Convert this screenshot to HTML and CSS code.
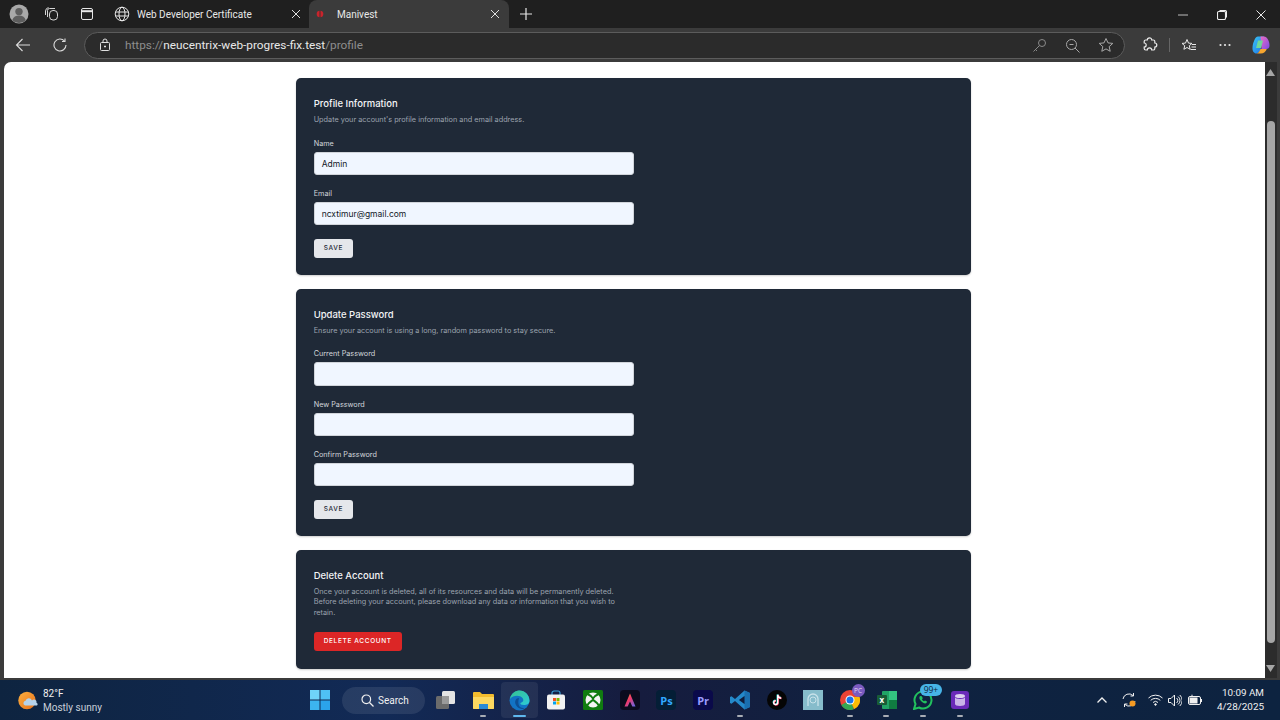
FILE: index.html
```html
<!DOCTYPE html>
<html lang="en">
<head>
<meta charset="utf-8">
<title>Manivest</title>
<link rel="stylesheet" href="styles.css">
</head>
<body>
<div class="tabstrip">
  <div class="strip-left">
    <svg class="avatar" width="20" height="20" viewBox="0 0 20 20"><circle cx="10" cy="10" r="9.5" fill="#a9a9a9"/><circle cx="10" cy="7.6" r="3.7" fill="#5e5e5e"/><path d="M3.2 16.2c1.2-3.4 3.7-4.7 6.8-4.7s5.600 1.300 6.800 4.700A9.500 9.500 0 0 1 3.200 16.200z" fill="#5e5e5e"/></svg>
    <svg class="strip-ic" width="16" height="16" viewBox="0 0 16 16" fill="none" stroke="#d6d6d6"><path d="M3.500 11V4.500a2 2 0 0 1 2-2H11"/><rect x="5.500" y="4.500" width="8" height="9.500" rx="3.500"/><path d="M1.500 9V5a4 4 0 0 1 3-3.500"/></svg>
    <svg class="strip-ic" width="14" height="14" viewBox="0 0 14 14" fill="none" stroke="#e6e6e6"><rect x="1.500" y="1.500" width="11" height="11" rx="1.500"/><path d="M1.500 4.200h11" stroke-width="2"/></svg>
    <span class="strip-sep"></span>
  </div>
  <div class="tab">
    <svg width="16" height="16" viewBox="0 0 16 16" fill="none" stroke="#e8e8e8"><circle cx="8" cy="8" r="6.800"/><ellipse cx="8" cy="8" rx="3" ry="6.800"/><path d="M1.500 6h13M1.500 10h13"/></svg>
    <span class="tab-title">Web Developer Certificate</span>
    <svg class="tab-x" width="10" height="10" viewBox="0 0 10 10" stroke="#e0e0e0"><path d="M1 1l8 8M9 1l-8 8"/></svg>
  </div>
  <div class="tab tab-active">
    <svg width="16" height="16" viewBox="0 0 16 16"><circle cx="8" cy="8" r="3.300" fill="#c8242c"/><path d="M8 4.500v7" stroke="#4a2a2c"/></svg>
    <span class="tab-title">Manivest</span>
    <svg class="tab-x" width="10" height="10" viewBox="0 0 10 10" stroke="#e0e0e0"><path d="M1 1l8 8M9 1l-8 8"/></svg>
  </div>
  <svg class="newtab" width="14" height="14" viewBox="0 0 14 14" stroke="#e6e6e6" stroke-width="1.200"><path d="M7 1v12M1 7h12"/></svg>
  <div class="winctl">
    <svg width="10" height="10" viewBox="0 0 10 10" stroke="#bdbdbd"><path d="M0 5h10"/></svg>
    <svg width="10" height="10" viewBox="0 0 10 10" fill="none" stroke="#eee" stroke-width="1.100"><rect x=".5" y="1.500" width="8" height="8" rx="1.200"/><path d="M2.500 .5h5.500a1.500 1.500 0 0 1 1.500 1.500v5.500"/></svg>
    <svg width="10" height="10" viewBox="0 0 10 10" stroke="#e8e8e8"><path d="M.5 .5l9 9M9.500 .5l-9 9"/></svg>
  </div>
</div>
<div class="toolbar">
  <svg class="back" width="16" height="14" viewBox="0 0 16 14" fill="none" stroke="#dcdcdc" stroke-width="1.100"><path d="M15 7H1.500M7.500 1l-6 6 6 6"/></svg>
  <svg class="reload" width="14" height="14" viewBox="0 0 14 14" fill="none" stroke="#dcdcdc" stroke-width="1.100"><path d="M11.500 3A6 6 0 1 0 13 7"/><path d="M12 .5V3.500H9"/></svg>
  <div class="omnibox">
    <svg class="lock" width="12" height="14" viewBox="0 0 12 14" fill="none" stroke="#e0e0e0"><rect x="1.500" y="4.500" width="9" height="8" rx="1"/><path d="M4 4.500V3a2 2 0 0 1 4 0v1.500"/><path d="M5 8.500h2" stroke-width="1.500"/></svg>
    <span class="url"><span class="url-dim">https://</span><span class="url-host">neucentrix-web-progres-fix.test</span><span class="url-dim">/profile</span></span>
    <div class="omni-right">
      <svg width="15" height="15" viewBox="0 0 15 15" fill="none" stroke="#8a8a8a"><circle cx="10" cy="5" r="3.500"/><path d="M7.500 7.500L1.500 13.500M3.500 11.500l1.500 1.500"/></svg>
      <svg width="15" height="15" viewBox="0 0 15 15" fill="none" stroke="#a8a8a8"><circle cx="6.500" cy="6.500" r="5"/><path d="M10 10l4.500 4.500M4.500 6.500h4"/></svg>
      <svg width="16" height="16" viewBox="0 0 16 16" fill="none" stroke="#a8a8a8"><path d="M8 1.500l2 4.400 4.800.5-3.600 3.200 1 4.700L8 11.900l-4.200 2.400 1-4.700L1.200 6.400 6 5.900z"/></svg>
    </div>
  </div>
  <div class="tool-right">
    <svg class="ext" width="16" height="16" viewBox="0 0 16 16" fill="none" stroke="#eaeaea" stroke-width="1.200"><path d="M5.300 3a2.200 2.200 0 0 1 4.400 0h1.600A1.500 1.500 0 0 1 12.800 4.500V6a2 2 0 0 1 0 4v1.500A1.500 1.500 0 0 1 11.300 13H9.700a2.200 2.200 0 0 0-4.400 0H3.700A1.500 1.500 0 0 1 2.200 11.500V10a2 2 0 0 0 0-4V4.500A1.500 1.500 0 0 1 3.700 3z"/></svg>
    <span class="tool-sep"></span>
    <svg class="fav" width="16" height="15" viewBox="0 0 16 15" fill="none" stroke="#eaeaea"><path d="M6 1.500l1.500 3.600 3.500.3-2.700 2.300.8 3.600L6 9.500l-3.100 1.800.8-3.600L1 5.400l3.500-.3zM11 6.500h4M10.500 9h4.500M9.500 11.500h5.500"/></svg>
    <svg class="dots" width="12" height="4" viewBox="0 0 12 4" fill="#e6e6e6"><circle cx="1.500" cy="2" r="1.100"/><circle cx="6" cy="2" r="1.100"/><circle cx="10.500" cy="2" r="1.100"/></svg>
    <svg class="copilot" width="18" height="18" viewBox="0 0 18 18"><defs><linearGradient id="cpa" x1="0" y1="0" x2="1" y2="1"><stop offset="0" stop-color="#39c6f4"/><stop offset="1" stop-color="#1f6fe8"/></linearGradient><linearGradient id="cpb" x1="0" y1="0" x2="1" y2="1"><stop offset="0" stop-color="#f06cc0"/><stop offset="1" stop-color="#7a4be8"/></linearGradient></defs><path d="M6 .5h6l-3.500 13c-.4 1.500-2 4-4 4C2 17.500.3 15 .5 12 .8 7 3 .5 6 .5z" fill="url(#cpa)"/><path d="M8.500.5H12c3 0 5.800 5 5.500 9.500-.1 2-1.500 3-3 3H9.500z" fill="url(#cpb)"/><path d="M4.500 17.500c2 0 3-2.500 4-4.500h6.300c-1 2.500-3 4.500-6 4.500z" fill="#f7a62f"/><path d="M6 4.500h5L9 12H4z" fill="#6fd89a"/></svg>
  </div>
</div>
<div class="viewport">
  <main class="page">
    <section class="card">
      <h2>Profile Information</h2>
      <p class="desc">Update your account's profile information and email address.</p>
      <label class="lbl lbl-first">Name</label>
      <div class="field">Admin</div>
      <label class="lbl">Email</label>
      <div class="field">ncxtimur@gmail.com</div>
      <span class="btn">SAVE</span>
    </section>
    <section class="card">
      <h2>Update Password</h2>
      <p class="desc">Ensure your account is using a long, random password to stay secure.</p>
      <label class="lbl lbl-first">Current Password</label>
      <div class="field"></div>
      <label class="lbl">New Password</label>
      <div class="field"></div>
      <label class="lbl">Confirm Password</label>
      <div class="field"></div>
      <span class="btn">SAVE</span>
    </section>
    <section class="card card-del">
      <h2>Delete Account</h2>
      <p class="desc desc-long">Once your account is deleted, all of its resources and data will be permanently deleted. Before deleting your account, please download any data or information that you wish to retain.</p>
      <span class="btn btn-red">DELETE ACCOUNT</span>
    </section>
  </main>
  <div class="scrollbar">
    <div class="track">
      <svg class="arrow" width="9" height="7" viewBox="0 0 9 7" fill="#a6a6a6"><path d="M4.500 0L9 7H0z"/></svg>
      <div class="thumb"></div>
      <svg class="arrow" width="9" height="7" viewBox="0 0 9 7" fill="#a6a6a6"><path d="M4.500 7L0 0h9z"/></svg>
    </div>
  </div>
</div>
<footer class="taskbar">
  <div class="weather">
    <svg width="20" height="20" viewBox="0 0 20 20"><defs><linearGradient id="sun" x1="0" y1="0" x2="1" y2="1"><stop offset="0" stop-color="#fbb040"/><stop offset="1" stop-color="#e8701a"/></linearGradient></defs><circle cx="9" cy="9.500" r="8.700" fill="url(#sun)"/><path d="M7 14.500a2.500 2.500 0 0 1 .5-4.800 3.500 3.500 0 0 1 6.500-.3 2.600 2.600 0 0 1 4.500 2.300 1.600 1.600 0 0 1 .5 2.800z" fill="#b6d2ea"/></svg>
    <div class="weather-text"><div>82°F</div><div class="w-sub">Mostly sunny</div></div>
  </div>
  <div class="task-center">
    <svg class="win" width="20" height="20" viewBox="0 0 20 20"><rect width="9.500" height="9.500" fill="#6fd3f8"/><rect x="10.500" width="9.500" height="9.500" fill="#4fc0f4"/><rect y="10.500" width="9.500" height="9.500" fill="#3cb4f0"/><rect x="10.500" y="10.500" width="9.500" height="9.500" fill="#2ba3ea"/></svg>
    <div class="search"><svg width="13" height="13" viewBox="0 0 13 13" fill="none" stroke="#f0f0f0" stroke-width="1.200"><circle cx="5.300" cy="5.300" r="4.300"/><path d="M8.500 8.500l4 4"/></svg><span>Search</span></div>
    <div class="ti"><svg width="20" height="20" viewBox="0 0 20 20"><rect x="0" y="6" width="13" height="13" rx="1.500" fill="#6b6b6b"/><rect x="6" y="1" width="13" height="13" rx="1.500" fill="#e4e4e4"/><rect x="6" y="6" width="7" height="8" fill="#9a9a9a"/></svg></div>
    <div class="ti"><svg width="21" height="19" viewBox="0 0 21 19"><path d="M0 2a1 1 0 0 1 1-1h6l2 2h11a1 1 0 0 1 1 1v13a1 1 0 0 1-1 1H1a1 1 0 0 1-1-1z" fill="#f3bc2e"/><path d="M0 6h21v11a1 1 0 0 1-1 1H1a1 1 0 0 1-1-1z" fill="#fcd860"/><rect x="6" y="13" width="9" height="5" fill="#2a8ad6"/></svg><i class="dot"></i></div>
    <div class="ti ti-on"><svg width="21" height="21" viewBox="0 0 21 21"><defs><linearGradient id="edge" x1="0" y1="0" x2="1" y2="1"><stop offset="0" stop-color="#36c48e"/><stop offset="1" stop-color="#2dc9d8"/></linearGradient></defs><circle cx="10.500" cy="10.500" r="10" fill="#1273c4"/><path d="M1 9C2 3 7 .5 10.500 .5 16 .5 20.500 5 20.500 11c0 3-3 4-5.500 4-3 0-4-1-3.500-2 3-1 3.500-3 2-5C11 5 4 5 1 9z" fill="url(#edge)"/><path d="M10 8c-3 0-4.500 3-3.500 6 1 3 4 5 8 5 1 0 .5-1-.5-1-3 0-6-3-4-10z" fill="#0d4f95"/></svg><i class="dot dot-on"></i></div>
    <div class="ti"><svg width="20" height="20" viewBox="0 0 20 20"><path d="M6 5V3a2 2 0 0 1 2-2h4a2 2 0 0 1 2 2v2" fill="none" stroke="#3aa0d8" stroke-width="1.200"/><rect x="1" y="4.500" width="18" height="15" rx="2" fill="#f2f2f2"/><rect x="7" y="8" width="3" height="3" fill="#f25022"/><rect x="10.500" y="8" width="3" height="3" fill="#7fba00"/><rect x="7" y="11.500" width="3" height="3" fill="#00a4ef"/><rect x="10.500" y="11.500" width="3" height="3" fill="#ffb900"/></svg></div>
    <div class="ti"><svg width="20" height="20" viewBox="0 0 20 20"><rect width="20" height="20" rx="1.500" fill="#107c10"/><circle cx="10" cy="10" r="7.500" fill="#f4f4f4"/><path d="M3.500 3.500C7 5 9 7 10 8.500 11 7 13 5 16.500 3.500M3.500 17C5 13 8 11 10 9.800 12 11 15 13 16.500 17" fill="none" stroke="#107c10" stroke-width="2"/></svg></div>
    <div class="ti"><svg width="20" height="20" viewBox="0 0 20 20"><defs><linearGradient id="aff" x1="0" y1="0" x2="1" y2="1"><stop offset="0" stop-color="#fbb02c"/><stop offset=".45" stop-color="#f0386b"/><stop offset="1" stop-color="#5a6cf0"/></linearGradient></defs><rect width="20" height="20" rx="4" fill="#0b0b1e"/><path d="M10 3.500l5.500 13h-3.200L10 11.500 7.700 16.500H4.500z" fill="url(#aff)"/></svg></div>
    <div class="ti"><span class="app app-ps">Ps</span></div>
    <div class="ti"><span class="app app-pr">Pr</span></div>
    <div class="ti"><svg width="20" height="20" viewBox="0 0 20 20"><path d="M14.500 .5L20 3v14l-5.500 2.500L5 11l-3.500 2.800L0 13V7l1.500-.8L5 9z" fill="#2489ca"/><path d="M14.500 .5L20 3v14l-5.500 2.500zM14.500 6L9 10l5.500 4z" fill="#1a6fb0"/><path d="M14.500 6v8L9 10z" fill="#0f1d3c"/></svg><i class="dot"></i></div>
    <div class="ti"><svg width="20" height="20" viewBox="0 0 20 20"><circle cx="10" cy="10" r="10" fill="#050505"/><path d="M10.500 4.500v7.800a2 2 0 1 1-2-2M10.500 4.500c.3 2 1.700 3.200 3.500 3.400" fill="none" stroke="#25f4ee" stroke-width="1.800"/><path d="M11 5v7.800a2 2 0 1 1-2-2M11 5c.3 2 1.700 3.200 3.500 3.400" fill="none" stroke="#fe2c55" stroke-width="1.800"/><path d="M10.700 4.800v7.800a2 2 0 1 1-2-2M10.700 4.800c.3 2 1.700 3.200 3.500 3.400" fill="none" stroke="#fff" stroke-width="1.400"/></svg></div>
    <div class="ti"><svg width="20" height="20" viewBox="0 0 20 20"><rect width="20" height="20" fill="#86bccb"/><path d="M5 16V9a5 5 0 0 1 10 0v7" fill="none" stroke="#c8e2ea" stroke-width="1.300"/><circle cx="10" cy="10" r="3" fill="none" stroke="#c8e2ea"/></svg></div>
    <div class="ti"><svg width="20" height="20" viewBox="0 0 20 20"><circle cx="10" cy="10" r="10" fill="#ea4335"/><path d="M10 10L1.300 15A10 10 0 0 0 10 20c1.500 0 3-.3 4-1z" fill="#34a853"/><path d="M10 10l4.300 9A10 10 0 0 0 19.600 7H10z" fill="#fbbc05"/><circle cx="10" cy="10" r="4.500" fill="#fff"/><circle cx="10" cy="10" r="3.500" fill="#1a73e8"/></svg><b class="badge-pc">PC</b><i class="dot"></i></div>
    <div class="ti"><svg width="20" height="18" viewBox="0 0 20 18"><rect x="5" y="0" width="15" height="18" rx="1" fill="#21a366"/><rect x="12" y="9" width="8" height="9" fill="#107c41"/><rect x="12" y="0" width="8" height="9" fill="#33c481"/><rect x="0" y="4" width="10" height="10" rx="1" fill="#185c37"/><text x="2.600" y="12" class="xl">x</text></svg><i class="dot"></i></div>
    <div class="ti"><svg width="20" height="20" viewBox="0 0 20 20"><path d="M1 19l1.500-5A8.500 8.500 0 1 1 6 17.500z" fill="none" stroke="#22c15e" stroke-width="2"/><path d="M7 6c-1 1-1 3 1 5s4 3 5.500 2l.5-1.500-2-1-1 .8c-1-.5-1.500-1-2-2l.8-1-1-2z" fill="#22c15e"/></svg><b class="badge-wa">99+</b><i class="dot"></i></div>
    <div class="ti"><svg width="18" height="18" viewBox="0 0 18 18"><rect width="18" height="18" rx="3" fill="#6a2bb8"/><ellipse cx="9" cy="5" rx="5" ry="2" fill="#ddd2ef"/><path d="M4 6v7c0 1 2 2 5 2s5-1 5-2V6c0 1-2 2-5 2S4 7 4 6z" fill="#c9b5e8"/></svg><i class="dot"></i></div>
  </div>
  <div class="tray">
    <svg class="chev" width="10" height="6" viewBox="0 0 10 6" fill="none" stroke="#f0f0f0" stroke-width="1.300"><path d="M.5 5.500L5 1l4.500 4.500"/></svg>
    <svg class="sync" width="16" height="16" viewBox="0 0 16 16" fill="none" stroke="#f0f0f0"><path d="M2 7a6 6 0 0 1 10-3.500M12.500 1v3h-3M14 9a6 6 0 0 1-10 3.500M3.500 15v-3h3"/><circle cx="11.500" cy="11.500" r="3" fill="#f59b23" stroke="none"/></svg>
    <svg class="wifi" width="15" height="12" viewBox="0 0 15 12" fill="none" stroke="#f0f0f0"><path d="M.5 4a10 10 0 0 1 14 0M2.700 6.300a7 7 0 0 1 9.600 0M5 8.500a3.600 3.600 0 0 1 5 0"/><circle cx="7.500" cy="10.500" r=".8" fill="#f0f0f0"/></svg>
    <svg class="vol" width="14" height="13" viewBox="0 0 14 13" fill="none" stroke="#f0f0f0"><path d="M.5 4.500h2.500L6.500 1v11L3 8.500H.5zM8.500 4a3 3 0 0 1 0 5M10 2.500a5 5 0 0 1 0 8M11.800 1a7.500 7.500 0 0 1 0 11"/></svg>
    <svg class="bat" width="14" height="12" viewBox="0 0 14 12" fill="#f0f0f0"><rect x=".5" y="2.500" width="12" height="8" rx="1.500" fill="none" stroke="#f0f0f0"/><rect x="1.500" y="3.500" width="8" height="6"/><rect x="13" y="5" width="1" height="3"/><path d="M4 0L3 3h2z"/></svg>
    <div class="clock"><div>10:09 AM</div><div>4/28/2025</div></div>
  </div>
</footer>
</body>
</html>
```
FILE: styles.css
```css
* { box-sizing: border-box; }
html, body { margin: 0; padding: 0; }
body {
  width: 1280px; height: 720px; overflow: hidden; display: flex; flex-direction: column;
  background: #3b3b3b; font-family: Roboto, "Noto Sans", sans-serif; color: #e8e8e8;
}
svg { display: block; flex: none; }

.tabstrip { height: 28px; background: #1f1f1f; display: flex; align-items: stretch; flex: none; }
.strip-left { width: 109px; display: flex; align-items: center; padding-left: 9px; }
.strip-ic { margin-left: 15px; }
.strip-ic + .strip-ic { margin-left: 20px; }
.strip-sep { width: 1px; height: 18px; background: #4a4a4a; margin-left: 16px; }
.tab { width: 198px; height: 28px; display: flex; align-items: center; padding-left: 5px; padding-right: 6px; margin-right: 2px; font-size: 10px; color: #e8e8e8; }
.tab-title { margin-left: 7px; flex: 1; white-space: nowrap; }
.tab-active { width: 200px; margin-left: 0; margin-right: 0; background: #3b3b3b; border-radius: 8px 8px 0 0; padding-left: 3px; padding-right: 9px; }
.tab-active .tab-title { margin-left: 9px; }
.newtab { align-self: center; margin-left: 10px; }
.winctl { margin-left: auto; display: flex; align-items: center; gap: 29px; padding-right: 14px; padding-top: 1px; }

.toolbar { height: 34px; background: #3b3b3b; display: flex; align-items: center; flex: none; padding-left: 15px; }
.reload { margin-left: 22px; }
.omnibox {
  margin-left: 17px; width: 1041px; height: 27px; border: 1px solid #5c5c5c; border-radius: 14px;
  background: #2b2b2b; display: flex; align-items: center; padding-left: 14px; padding-right: 10px;
}
.url { margin-left: 14px; font-size: 11.800px; white-space: nowrap; }
.url-dim { color: #8e8e8e; }
.url-host { color: #e8e8e8; }
.omni-right { margin-left: auto; display: flex; align-items: center; gap: 18px; }
.tool-right { display: flex; align-items: center; margin-left: 17px; }
.tool-sep { width: 1px; height: 14px; background: #666; margin-left: 11px; }
.fav { margin-left: 11px; }
.dots { margin-left: 22px; }
.copilot { margin-left: 21px; }

.viewport { height: 616px; display: flex; padding-left: 4px; flex: none; }
.page { width: 1260.500px; background: #fff; border-radius: 7px 0 0 0; padding: 16px 0 0 291.700px; overflow: hidden; }
.scrollbar { flex: 1; background: #3b3b3b; }
.track { width: 12px; height: 100%; background: #2c2c2c; display: flex; flex-direction: column; align-items: center; padding-top: 7px; }
.thumb { width: 8px; height: 522px; background: #a6a6a6; border-radius: 4px; margin-top: 45px; }
.arrow { margin-top: 0; }
.thumb + .arrow { margin-top: 22px; }

.card {
  width: 675.700px; background: #1f2937; border-radius: 5px; padding: 18.700px 18px 17.500px; margin-bottom: 13.500px;
  box-shadow: 0 1px 2px rgba(0,0,0,.2); color: #f3f4f6; font-family: Inter, "Noto Sans", sans-serif;
}
h2 { margin: 0; font-size: 9.500px; line-height: 14px; font-weight: 500; color: #f3f4f6; }
.desc { margin: 4px 0 0; font-size: 7.300px; line-height: 10.670px; color: #9ca3af; }
.desc-long { width: 320px; }
.lbl { display: block; margin-top: 13px; font-size: 7.250px; line-height: 11px; font-weight: 400; color: #d1d5db; }
.lbl-first { margin-top: 12.300px; }
.field {
  width: 320px; height: 23.330px; margin-top: 3px; background: #f0f6ff; border: 1px solid #d1d5db; border-radius: 3px;
  padding-left: 7px; font-size: 8.500px; line-height: 22.300px; color: #111827;
}
.btn {
  display: inline-block; margin-top: 13.500px; height: 19px; padding: 0 10px; line-height: 19.600px; background: #e5e7eb;
  border-radius: 3px; font-size: 6.500px; font-weight: 500; letter-spacing: .65px; color: #1f2937; vertical-align: top;
}
.btn-red { background: #dc2626; color: #fff; margin-top: 13.500px; }
.card-del { padding-bottom: 18px; margin-bottom: 0; }

.taskbar {
  flex: 1; margin-top: 2px; display: flex; align-items: center; position: relative;
  background: linear-gradient(90deg, #0e2440 0%, #122a56 30%, #161c3e 50%, #0f2240 70%, #0d2340 100%);
  font-size: 10px; color: #f0f0f0;
}
.weather { display: flex; align-items: center; width: 304px; padding-left: 18px; padding-top: 1px; }
.weather-text { margin-left: 5px; line-height: 14px; }
.w-sub { color: #c9d0da; }
.task-center { display: flex; align-items: center; }
.win { margin-left: 6px; }
.search {
  width: 83px; height: 27px; margin-left: 12px; margin-right: 3px; border-radius: 14px; background: rgba(255,255,255,.09);
  display: flex; align-items: center; padding-left: 19px; gap: 4px; font-size: 10px;
}
.ti { width: 36.700px; height: 36px; display: flex; align-items: center; justify-content: center; position: relative; border-radius: 4px; }
.ti-on { background: rgba(255,255,255,.07); }
.dot { position: absolute; left: 15px; bottom: 1px; width: 6px; height: 2px; border-radius: 1px; background: #a8adb5; }
.dot-on { left: 12px; width: 13px; background: #5fb8ee; }
.app { width: 20px; height: 20px; border-radius: 4px; display: flex; align-items: center; justify-content: center; font: 700 11px/1 "Open Sans", sans-serif; }
.app-ps { background: #041e36; color: #31a8ff; }
.app-pr { background: #0a0a4a; color: #9a9aff; }
.xl { font: 700 8px "Open Sans", sans-serif; fill: #fff; }
.badge-pc { position: absolute; left: 20px; top: 2px; width: 13px; height: 13px; border-radius: 50%; background: #7a5bc0; color: #e0d8f5; font: 500 6.500px/13px "Open Sans", sans-serif; text-align: center; }
.badge-wa { position: absolute; left: 15px; top: 2px; width: 22px; height: 12px; border-radius: 6px; background: #47b4e8; color: #10243c; font: 500 8.500px/12px "Open Sans", sans-serif; text-align: center; }
.tray { margin-left: auto; display: flex; align-items: center; padding-right: 16px; }
.sync { margin-left: 14px; }
.wifi { margin-left: 10.500px; }
.vol { margin-left: 5.500px; }
.bat { margin-left: 6px; }
.clock { margin-left: 15px; text-align: right; line-height: 14px; font-size: 9.900px; }
```
